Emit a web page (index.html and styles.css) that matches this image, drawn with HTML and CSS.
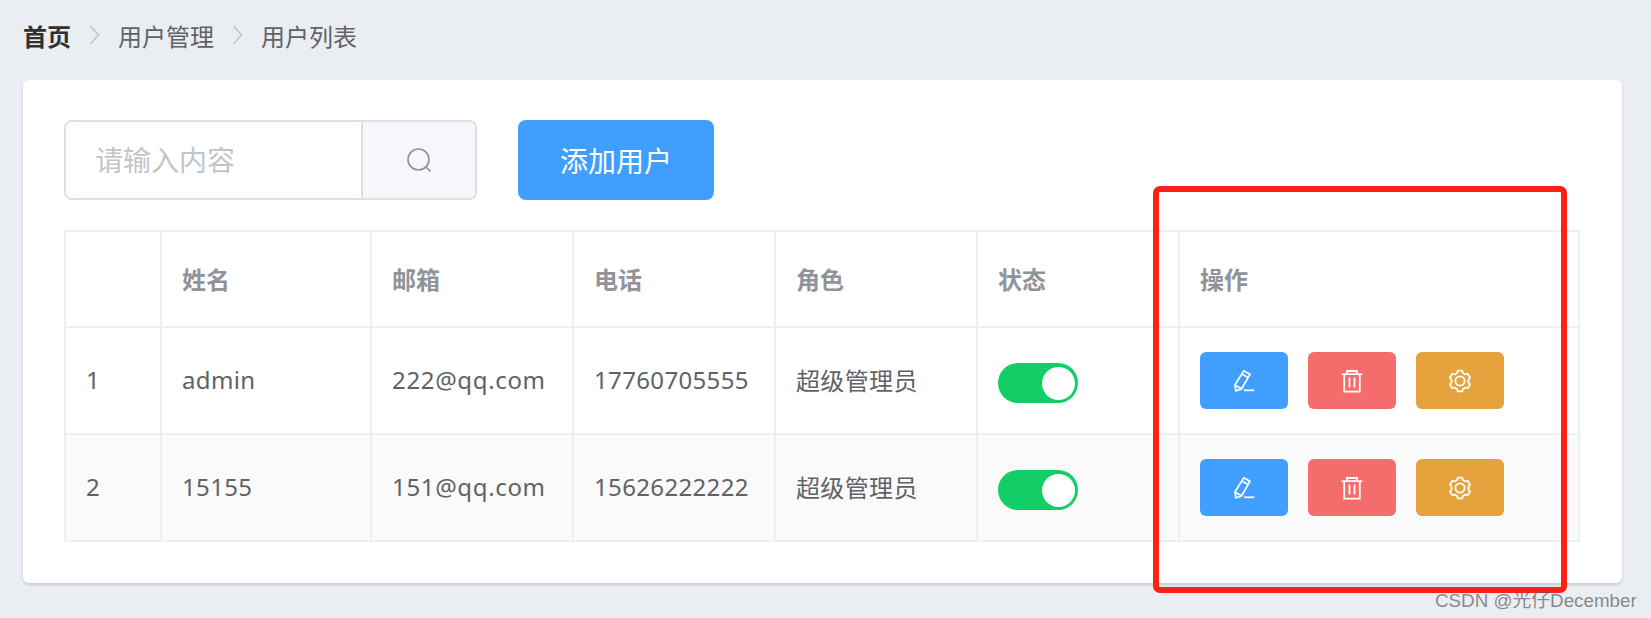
FILE: index.html
```html
<!doctype html>
<html>
  <head>
    <meta charset="utf-8">
    <meta name="viewport" content="width=device-width, initial-scale=1">
    <link rel="stylesheet" href="styles.css">
    <title>用户列表</title>
  </head>
  <body>
    <svg class="icon-defs" aria-hidden="true">
      <symbol id="icon-edit" viewBox="0 0 24 24">
        <path d="M11.8 1.8 L18 5.4 L9.5 20 L3.8 21.8 L3 15.8 Z M9.8 5 L16 8.6 M3.2 16.2 L9.3 19.8" fill="none" stroke="currentColor" stroke-width="1.7"/>
        <path d="M12 21.3 H22.3" fill="none" stroke="currentColor" stroke-width="1.8"/>
      </symbol>
      <symbol id="icon-delete" viewBox="0 0 24 24">
        <path d="M1.7 5.2 H22.3 M7 5 V2 H17 V5 M4.2 5.2 V22.6 H19.8 V5.2 M9.5 8.5 V18.5 M14.5 8.5 V18.5" fill="none" stroke="currentColor" stroke-width="1.8"/>
      </symbol>
      <symbol id="icon-setting" viewBox="0 0 24 24">
        <path d="M9.06 3.92 L9.8 1.63 H14.2 L14.94 3.92 L17.53 5.41 L19.88 4.91 L22.08 8.72 L20.47 10.51 V13.49 L22.08 15.28 L19.88 19.09 L17.53 18.59 L14.94 20.08 L14.2 22.37 H9.8 L9.06 20.08 L6.47 18.59 L4.12 19.09 L1.92 15.28 L3.53 13.49 V10.51 L1.92 8.72 L4.12 4.91 L6.47 5.41 Z" fill="none" stroke="currentColor" stroke-width="1.8" stroke-linejoin="round"/>
        <circle cx="12" cy="12" r="4.6" fill="none" stroke="currentColor" stroke-width="1.8"/>
      </symbol>
    </svg>

    <div class="breadcrumb">
      <span class="crumb crumb-home">首页</span>
      <svg class="crumb-sep" viewBox="0 0 10 20"><path d="M1 1 L9 10 L1 19" fill="none" stroke="currentColor" stroke-width="1.5"/></svg>
      <span class="crumb">用户管理</span>
      <svg class="crumb-sep" viewBox="0 0 10 20"><path d="M1 1 L9 10 L1 19" fill="none" stroke="currentColor" stroke-width="1.5"/></svg>
      <span class="crumb">用户列表</span>
    </div>

    <div class="card">
      <div class="toolbar">
        <div class="search">
          <input class="search-input" type="text" placeholder="请输入内容">
          <div class="search-append">
            <svg class="search-icon" viewBox="0 0 24 24"><circle cx="11.5" cy="11.5" r="10.5" fill="none" stroke="currentColor" stroke-width="1.7"/><path d="M19 19 L23.5 23.5" fill="none" stroke="currentColor" stroke-width="1.7"/></svg>
          </div>
        </div>
        <button class="add-btn">添加用户</button>
      </div>

      <table class="user-table">
        <colgroup>
          <col class="col-index">
          <col class="col-name">
          <col class="col-mid">
          <col class="col-mid">
          <col class="col-mid">
          <col class="col-mid">
          <col class="col-ops">
        </colgroup>
        <thead>
          <tr>
            <th></th>
            <th>姓名</th>
            <th>邮箱</th>
            <th>电话</th>
            <th>角色</th>
            <th>状态</th>
            <th>操作</th>
          </tr>
        </thead>
        <tbody>
          <tr>
            <td>1</td>
            <td>admin</td>
            <td class="cell-email">222@qq.com</td>
            <td>17760705555</td>
            <td>超级管理员</td>
            <td class="cell-switch"><span class="switch"><span class="switch-knob"></span></span></td>
            <td class="cell-ops">
              <div class="ops">
                <button class="op-btn op-edit"><svg class="op-icon"><use href="#icon-edit"/></svg></button>
                <button class="op-btn op-delete"><svg class="op-icon"><use href="#icon-delete"/></svg></button>
                <button class="op-btn op-setting"><svg class="op-icon"><use href="#icon-setting"/></svg></button>
              </div>
            </td>
          </tr>
          <tr class="striped">
            <td>2</td>
            <td>15155</td>
            <td class="cell-email">151@qq.com</td>
            <td>15626222222</td>
            <td>超级管理员</td>
            <td class="cell-switch"><span class="switch"><span class="switch-knob"></span></span></td>
            <td class="cell-ops">
              <div class="ops">
                <button class="op-btn op-edit"><svg class="op-icon"><use href="#icon-edit"/></svg></button>
                <button class="op-btn op-delete"><svg class="op-icon"><use href="#icon-delete"/></svg></button>
                <button class="op-btn op-setting"><svg class="op-icon"><use href="#icon-setting"/></svg></button>
              </div>
            </td>
          </tr>
        </tbody>
      </table>
    </div>

    <div class="red-frame"></div>
    <div class="watermark">CSDN @光仔December</div>
  </body>
</html>
```
FILE: styles.css
```css
html, body {
  margin: 0;
  height: 618px;
  overflow: hidden;
}
body {
  position: relative;
  background-color: #eaedf2;
  font-family: "Noto Sans", "Noto Sans CJK SC", sans-serif;
  font-size: 24px;
  color: #606266;
}
.icon-defs {
  display: none;
}
.breadcrumb {
  display: flex;
  align-items: center;
  height: 80px;
  padding-left: 23px;
  padding-bottom: 10px;
  box-sizing: border-box;
}
.crumb-home {
  font-weight: bold;
  color: #303133;
}
.crumb-sep {
  width: 11px;
  height: 20px;
  margin: 0 18px;
  color: #c0c4cc;
}
.card {
  margin: 0 29px 0 23px;
  height: 503px;
  padding: 40px 42px 0 41px;
  box-sizing: border-box;
  background-color: #fff;
  border-radius: 6px;
  box-shadow: 0 2px 3px rgba(0, 0, 0, 0.15);
}
.toolbar {
  display: flex;
  height: 80px;
  margin-bottom: 30px;
}
.search {
  display: flex;
  width: 413px;
  height: 80px;
  box-sizing: border-box;
  border: 2px solid #dcdfe6;
  border-radius: 8px;
  overflow: hidden;
}
.search-input {
  flex: 1;
  min-width: 0;
  padding: 0 29px;
  border: 0;
  outline: 0;
  font-family: inherit;
  font-size: 28px;
  color: #606266;
}
.search-input::placeholder {
  color: #c0c4cc;
}
.search-append {
  display: flex;
  align-items: center;
  justify-content: center;
  width: 112px;
  border-left: 2px solid #dcdfe6;
  background-color: #f5f7fa;
  color: #909399;
}
.search-icon {
  width: 24px;
  height: 24px;
}
.add-btn {
  width: 196px;
  height: 80px;
  margin-left: 41px;
  padding: 0;
  border: 0;
  border-radius: 8px;
  background-color: #409eff;
  color: #fff;
  font-family: inherit;
  font-size: 28px;
}
.user-table {
  width: 1516px;
  border-collapse: collapse;
  table-layout: fixed;
}
.col-index {
  width: 96px;
}
.col-name {
  width: 210px;
}
.col-mid {
  width: 202px;
}
.col-ops {
  width: 400px;
}
.user-table th, .user-table td {
  box-sizing: border-box;
  padding: 0 20px 2px;
  border: 2px solid #ebeef5;
  text-align: left;
  white-space: nowrap;
}
.user-table th {
  height: 96px;
  color: #909399;
  font-weight: bold;
}
.user-table td {
  height: 107px;
  letter-spacing: 0.35px;
}
.user-table .cell-email {
  letter-spacing: 0.65px;
}
.user-table .cell-switch {
  padding: 5px 20px 0;
}
.user-table .cell-ops {
  padding: 0 20px;
}
.striped td {
  background-color: #fafafa;
}
.switch {
  display: block;
  position: relative;
  width: 80px;
  height: 40px;
  border-radius: 20px;
  background-color: #13ce66;
}
.switch-knob {
  position: absolute;
  top: 3.5px;
  right: 3.5px;
  width: 33px;
  height: 33px;
  border-radius: 50%;
  background-color: #fff;
}
.ops {
  display: flex;
  gap: 20px;
}
.op-btn {
  display: flex;
  align-items: center;
  justify-content: center;
  width: 88px;
  height: 57px;
  padding: 0;
  border: 0;
  border-radius: 6px;
  color: #fff;
}
.op-edit {
  background-color: #409eff;
}
.op-delete {
  background-color: #f56c6c;
}
.op-setting {
  background-color: #e6a23c;
}
.op-icon {
  width: 24px;
  height: 24px;
}
/* annotation drawn over the screenshot */
.red-frame {
  position: absolute;
  left: 1153px;
  top: 186px;
  width: 414px;
  height: 407px;
  box-sizing: border-box;
  border: 6.5px solid #ff2015;
  border-radius: 7px;
}
.watermark {
  position: absolute;
  left: 1435px;
  top: 585px;
  font-size: 18.8px;
  color: rgba(90, 90, 90, 0.7);
  font-family: "Liberation Sans", "Noto Sans CJK SC", sans-serif;
  white-space: nowrap;
}
```
